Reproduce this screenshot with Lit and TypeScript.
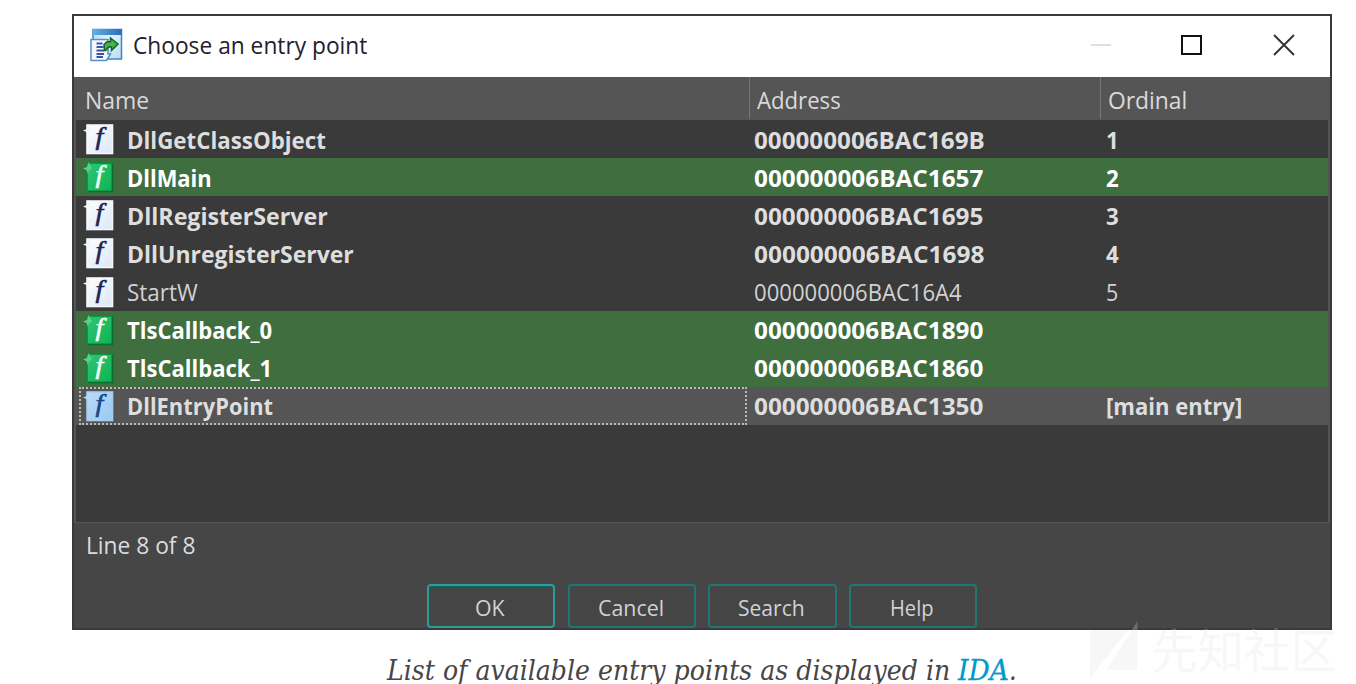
import { LitElement, html, css, svg } from "lit";
import { customElement, property } from "lit/decorators.js";
import { classMap } from "lit/directives/class-map.js";

/** A single line of text, condensed or widened to an exact advance width. */
@customElement("fit-text")
class FitText extends LitElement {
  @property() text = "";
  @property({ type: Number }) w = 0;

  static styles = css`
    :host { display: inline-block; white-space: pre; line-height: inherit; flex: none; }
    .run { display: inline-block; transform-origin: 0 50%; }
  `;

  updated() {
    const run = this.renderRoot.querySelector(".run") as HTMLElement;
    run.style.transform = "none";
    const natural = run.offsetWidth;
    this.style.width = this.w + "px";
    run.style.transform = `scaleX(${this.w / natural})`;
  }

  render() {
    return html`<span class="run">${this.text}</span>`;
  }
}

type Tone = "plain" | "green" | "blue";
interface Entry {
  name: string; nw: number;
  addr: string; aw: number;
  ord: string; ow: number;
  tone: Tone; light?: boolean; current?: boolean;
}

const ENTRIES: Entry[] = [
  { name: "DllGetClassObject", nw: 199, addr: "000000006BAC169B", aw: 231, ord: "1", ow: 13, tone: "plain" },
  { name: "DllMain", nw: 85, addr: "000000006BAC1657", aw: 229, ord: "2", ow: 13, tone: "green" },
  { name: "DllRegisterServer", nw: 201, addr: "000000006BAC1695", aw: 229, ord: "3", ow: 13, tone: "plain" },
  { name: "DllUnregisterServer", nw: 227, addr: "000000006BAC1698", aw: 230, ord: "4", ow: 13, tone: "plain" },
  { name: "StartW", nw: 71, addr: "000000006BAC16A4", aw: 208, ord: "5", ow: 12.5, tone: "plain", light: true },
  { name: "TlsCallback_0", nw: 145, addr: "000000006BAC1890", aw: 229, ord: "", ow: 0, tone: "green" },
  { name: "TlsCallback_1", nw: 145, addr: "000000006BAC1860", aw: 229, ord: "", ow: 0, tone: "green" },
  { name: "DllEntryPoint", nw: 146, addr: "000000006BAC1350", aw: 229, ord: "[main entry]", ow: 136, tone: "blue", current: true },
];

const TONES: Record<Tone, { edge: string; from: string; to: string; ink: string; nib: string }> = {
  plain: { edge: "#f4f7fa", from: "#ffffff", to: "#dbe6f6", ink: "#1b2558", nib: "#f4f7fa" },
  green: { edge: "#0b8a3a", from: "#2fc673", to: "#0fb254", ink: "#f4fff6", nib: "#5fd08a" },
  blue: { edge: "#a9cdee", from: "#b9dcf8", to: "#9cc8f0", ink: "#17468c", nib: "#b4d8f6" },
};

const functionIcon = (tone: Tone) => {
  const t = TONES[tone];
  return html`<svg class="fn" width="31" height="32" viewBox="0 0 31 32">
    <defs>
      <linearGradient id=${"sheet-" + tone} x1="0" y1="0" x2="1" y2="1">
        <stop offset="0" stop-color=${t.from}></stop>
        <stop offset="1" stop-color=${t.to}></stop>
      </linearGradient>
    </defs>
    <rect x="4" y="2" width="25.500" height="28.500" fill=${`url(#sheet-${tone})`} stroke=${t.edge} stroke-width="1.600"></rect>
    ${tone === "green"
      ? svg`<path d="M5 30.500H29.500V3" fill="none" stroke="#08702e" stroke-width="1.600"></path>`
      : svg``}
    <path d="M0 7.500L4 6L5.500 1L8 6L9 8L6 9L5 13L3.500 9Z" fill=${t.nib}></path>
    <text class="glyph" transform="translate(16.300 21.500) scale(1.080 1)" text-anchor="middle" fill=${t.ink} stroke=${t.ink} stroke-width="0.600">f</text>
  </svg>`;
};

const windowIcon = html`<svg class="app-icon" width="33" height="34" viewBox="0 0 33 34">
  <defs>
    <linearGradient id="bar" x1="0" y1="0" x2="1" y2="0">
      <stop offset="0" stop-color="#5fb0e4"></stop><stop offset="1" stop-color="#2a6cba"></stop>
    </linearGradient>
    <linearGradient id="pane" x1="0" y1="0" x2="1" y2="1">
      <stop offset="0" stop-color="#a5d8f4"></stop><stop offset=".4" stop-color="#e2f3fc"></stop>
      <stop offset="1" stop-color="#b9dbf4"></stop>
    </linearGradient>
  </defs>
  <rect x="3" y="1.500" width="28.500" height="29.500" fill="url(#pane)" stroke="#4384bf" stroke-width="1.500"></rect>
  <rect x="3" y="1" width="28.500" height="6" fill="url(#bar)"></rect>
  <path d="M1 11.500H18V26L20.500 26L16.500 32.500H1Z" fill="#f3f8fd" stroke="#5a8fc4" stroke-width="1.500"></path>
  <path d="M6.500 15.500H12.500M6.500 19H13.500M6.500 22.500H14M6.500 26H14M6.500 29H13" stroke="#3a53a6" stroke-width="1.800"></path>
  <path d="M14.500 22.500L14 16.500L17 13.800H20.500V10L28 16L21.500 22.500V19H18.500L15.800 22.500Z" fill="#46b349" stroke="#14602a" stroke-width="1.500"></path>
</svg>`;

@customElement("app-root")
class AppRoot extends LitElement {
  static styles = css`
    :host {
      display: block; position: relative; box-sizing: border-box; width: 1356px; height: 684px;
      overflow: hidden; background: #fff; padding: 14px 0 0 72px;
      font-family: "Open Sans", "Noto Sans", sans-serif;
    }
    .window {
      box-sizing: border-box; width: 1260px; height: 616px; display: flex; flex-direction: column;
      border: 2px solid #3a3a3c; background: #464646; color: #dcdcdc;
      font-size: 24px; line-height: 38px;
    }
    .title { height: 60.500px; background: #fff; display: flex; align-items: center; color: #24202c; flex: none; }
    .app-icon { margin: -3px 0 0 16px; display: block; flex: none; }
    .title fit-text { margin: -2px auto 0 10px; }
    .caps { display: block; margin: -5px 33px 0 0; flex: none; }
    .list {
      height: 446px; box-sizing: border-box; background: #3a3a3a; flex: none;
      border: solid #555; border-width: 0 2px 1px 2px; display: flex; flex-direction: column;
    }
    .row { display: grid; grid-template-columns: 673px 351px 1fr; height: 38.120px; align-items: center; flex: none; }
    .head { height: 43.600px; background: #555; color: #dadada; }
    .head > div { box-sizing: border-box; height: 42px; padding: 4px 0 0 8.500px; }
    .head > div + div { border-left: 1px solid #777; padding-left: 6.500px; }
    .body .row { font-weight: 700; color: #dedede; }
    .body .row > div { height: 38.120px; box-sizing: border-box; display: flex; align-items: center; padding-left: 5px; }
    .body .row > div:first-child { padding-left: 6.500px; }
    .body .row > .last { padding-left: 6px; }
    .body fit-text { margin-top: 1px; }
    .body .green { background: #3f6e3f; color: #fff; }
    .body .current { background: #555; }
    .body .light { font-weight: 400; color: #d2d2d2; }
    .body .current > div:first-child { border: 2px dotted #b9b9b9; margin: 0 2px 0 3px; padding-left: 1.500px; }
    .fn { display: block; margin-right: 13px; flex: none; overflow: visible; }
    .glyph { font: italic 400 26px "Liberation Serif", serif; }
    .status { padding: 3px 0 0 12px; height: 61.500px; box-sizing: border-box; flex: none; }
    .buttons { display: flex; gap: 12.500px; padding-left: 353px; }
    button {
      box-sizing: border-box; width: 128.200px; height: 44px; border: 2px solid #1f7773; border-radius: 4px;
      background: #454545; padding: 1px 2px 0 0; color: #d2d2d6; font: 400 22px/36px "Open Sans", sans-serif;
      display: flex; justify-content: center; align-items: center;
    }
    button.default { border-color: #2d9b98; box-shadow: inset 0 1px 0 #0d6461; }
    .caption {
      box-sizing: border-box; padding: 20px 0 0 315px; height: 54px; color: #464646; display: flex;
      font: italic 400 27px/41px "DejaVu Serif", serif;
    }
    .caption .link { color: #0099cc; margin-left: 8px; -webkit-text-stroke: 0.3px #0099cc; }
    .mark {
      position: absolute; left: 1090px; top: 619px; display: flex; color: rgba(224, 224, 224, 0.26);
      font: 400 46.500px/58px "Noto Sans CJK SC", sans-serif; white-space: nowrap;
    }
    .mark svg { display: block; margin-right: 13px; flex: none; }
  `;

  private row(e: Entry) {
    return html`<div class=${classMap({ row: true, green: e.tone === "green", current: !!e.current, light: !!e.light })}>
      <div>${functionIcon(e.tone)}<fit-text .text=${e.name} .w=${e.nw}></fit-text></div>
      <div><fit-text .text=${e.addr} .w=${e.aw}></fit-text></div>
      <div class="last">${e.ord ? html`<fit-text .text=${e.ord} .w=${e.ow}></fit-text>` : ""}</div>
    </div>`;
  }

  render() {
    return html`
      <div class="window">
        <div class="title">
          ${windowIcon}
          <fit-text .text=${"Choose an entry point"} .w=${234}></fit-text>
          <svg class="caps" width="206" height="24" viewBox="0 0 206 24">
            <path d="M0 13H20" stroke="#d4d4d4" stroke-width="1.500"></path>
            <rect x="91" y="4" width="19" height="18" fill="none" stroke="#111" stroke-width="2"></rect>
            <path d="M183 3L203 23M203 3L183 23" stroke="#333" stroke-width="1.900"></path>
          </svg>
        </div>
        <div class="list">
          <div class="row head">
            <div><fit-text .text=${"Name"} .w=${64}></fit-text></div>
            <div><fit-text .text=${"Address"} .w=${84}></fit-text></div>
            <div><fit-text .text=${"Ordinal"} .w=${79}></fit-text></div>
          </div>
          <div class="body">${ENTRIES.map((e) => this.row(e))}</div>
        </div>
        <div class="status"><fit-text .text=${"Line 8 of 8"} .w=${109}></fit-text></div>
        <div class="buttons">
          <button class="default"><fit-text .text=${"OK"} .w=${30}></fit-text></button>
          <button><fit-text .text=${"Cancel"} .w=${66}></fit-text></button>
          <button><fit-text .text=${"Search"} .w=${67}></fit-text></button>
          <button><fit-text .text=${"Help"} .w=${44}></fit-text></button>
        </div>
      </div>
      <div class="caption">
        <fit-text .text=${"List of available entry points as displayed in"} .w=${563}></fit-text>
        <fit-text class="link" .text=${"IDA"} .w=${51}></fit-text>
        <fit-text .text=${"."} .w=${8}></fit-text>
      </div>
      <div class="mark">
        <svg width="48" height="60" viewBox="0 0 48 60" fill="currentColor">
          <path d="M0 11H38L0 59Z"></path><path d="M47.500 2V51H18L11 51Z" transform="translate(7 0) scale(.853 1)"></path>
        </svg>
        <span>先知社区</span>
      </div>
    `;
  }
}
